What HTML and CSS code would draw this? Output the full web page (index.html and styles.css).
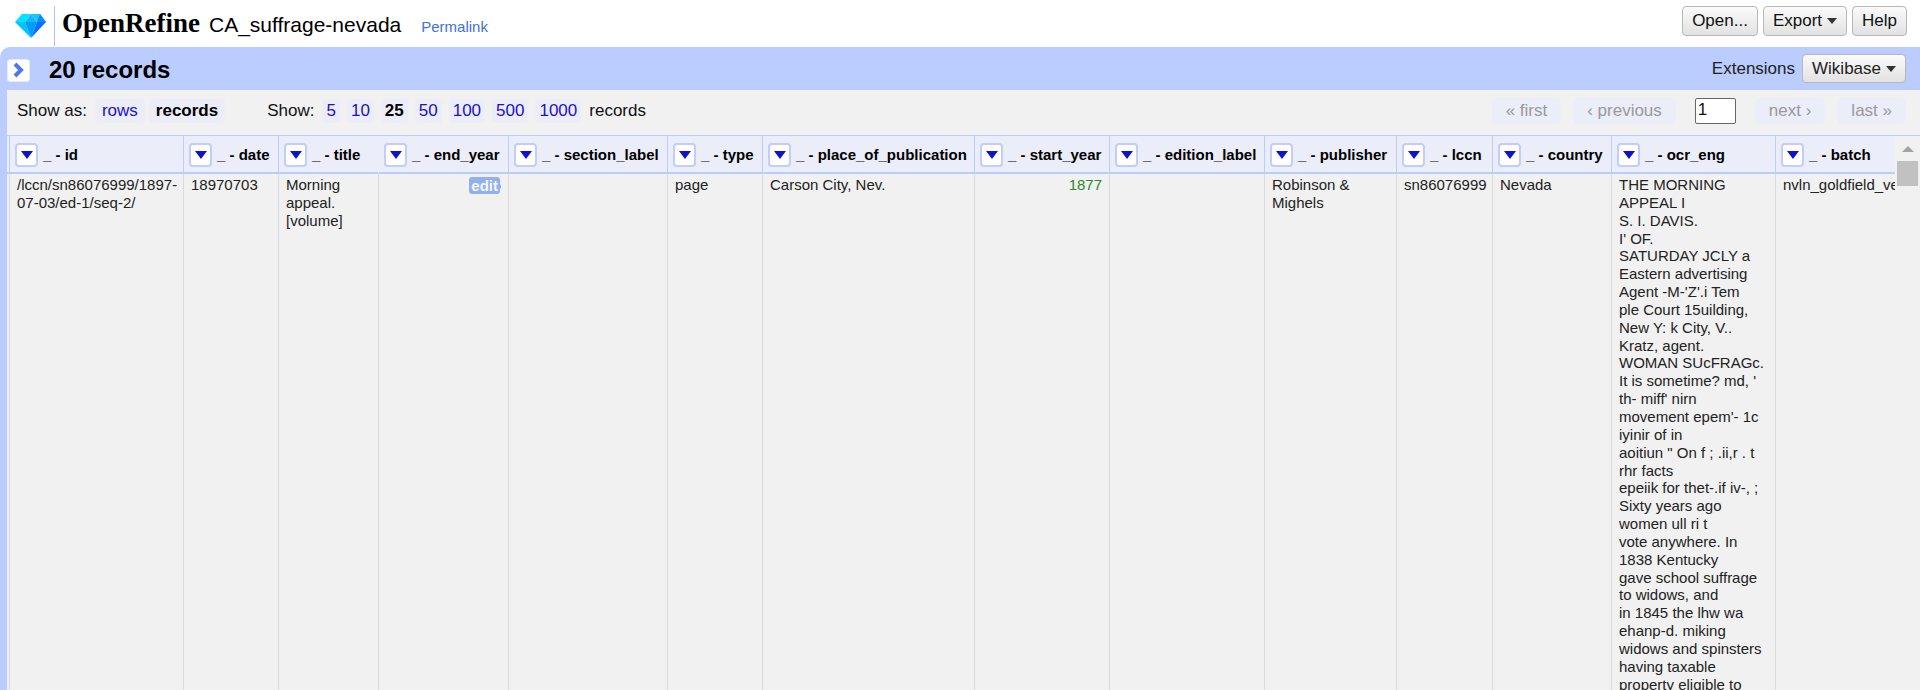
FILE: index.html
```html
<!DOCTYPE html>
<html lang="en">
<head>
<meta charset="utf-8">
<title>CA_suffrage-nevada - OpenRefine</title>
<link rel="stylesheet" href="styles.css">
</head>
<body>
<header class="header">
  <a class="gem" href="#" aria-label="Home">
    <svg width="32" height="26" viewBox="0 0 32 26">
      <path fill="#00e5ff" d="M7 1h9L10 9H0z"/>
      <path fill="#14c8ff" d="M16 1h9l6 8H22z"/>
      <path fill="#18b4ff" d="M16 1l6 8H10z"/>
      <path fill="#00c3ff" d="M0 9h10l6 16z"/>
      <path fill="#009dff" d="M10 9h12l-6 16z"/>
      <path fill="#0072ff" d="M22 9h9L16 25z"/>
      <path fill="#0a8cff" d="M25 1l6 8h-9z"/>
    </svg>
  </a>
  <span class="brand">OpenRefine</span>
  <h1 class="project">CA_suffrage-nevada</h1>
  <a class="permalink" href="#">Permalink</a>
  <div class="header-buttons">
    <button class="button" type="button">Open...</button>
    <button class="button" type="button">Export<span class="caret"></span></button>
    <button class="button" type="button">Help</button>
  </div>
</header>
<main class="panel">
  <div class="summary">
    <button class="expand" type="button" aria-label="Show side panel">
      <svg width="12" height="16" viewBox="0 0 12 16"><path d="M2 2l6 6-6 6" fill="none" stroke="#4c78e8" stroke-width="4"/></svg>
    </button>
    <h2 class="count">20 records</h2>
    <span class="extensions">Extensions</span>
    <button class="button" type="button">Wikibase<span class="caret"></span></button>
  </div>
  <div class="view">
    <div class="controls">
      <span>Show as:</span>
      <div class="modes"><a class="chip" href="#">rows</a><span class="chip current">records</span></div>
      <span>Show:</span>
      <div class="sizes">
        <a href="#">5</a><a href="#">10</a><span class="current">25</span><a href="#">50</a><a href="#">100</a><a href="#">500</a><a href="#">1000</a>
      </div>
      <span>records</span>
      <nav class="pager">
        <span class="page-link">« first</span>
        <span class="page-link">‹ previous</span>
        <input class="page-input" type="text" value="1" aria-label="Page">
        <span class="page-link">next ›</span>
        <span class="page-link">last »</span>
      </nav>
    </div>
    <div class="grid">
      <div class="grid-scroll">
        <table class="data">
          <colgroup>
            <col class="c-gutter"><col class="c-id"><col class="c-date"><col class="c-title"><col class="c-end"><col class="c-section"><col class="c-type"><col class="c-place"><col class="c-start"><col class="c-edition"><col class="c-publisher"><col class="c-lccn"><col class="c-country"><col class="c-ocr"><col class="c-batch">
          </colgroup>
          <thead>
            <tr>
              <th></th>
              <th><div class="head"><button class="menu" type="button" aria-label="id menu"></button>_ - id</div></th>
              <th><div class="head"><button class="menu" type="button" aria-label="date menu"></button>_ - date</div></th>
              <th class="open"><div class="head"><button class="menu" type="button" aria-label="title menu"></button>_ - title</div></th>
              <th><div class="head"><button class="menu" type="button" aria-label="end year menu"></button>_ - end_year</div></th>
              <th><div class="head"><button class="menu" type="button" aria-label="section label menu"></button>_ - section_label</div></th>
              <th><div class="head"><button class="menu" type="button" aria-label="type menu"></button>_ - type</div></th>
              <th><div class="head"><button class="menu" type="button" aria-label="place of publication menu"></button>_ - place_of_publication</div></th>
              <th><div class="head"><button class="menu" type="button" aria-label="start year menu"></button>_ - start_year</div></th>
              <th><div class="head"><button class="menu" type="button" aria-label="edition label menu"></button>_ - edition_label</div></th>
              <th><div class="head"><button class="menu" type="button" aria-label="publisher menu"></button>_ - publisher</div></th>
              <th><div class="head"><button class="menu" type="button" aria-label="lccn menu"></button>_ - lccn</div></th>
              <th><div class="head"><button class="menu" type="button" aria-label="country menu"></button>_ - country</div></th>
              <th><div class="head"><button class="menu" type="button" aria-label="ocr menu"></button>_ - ocr_eng</div></th>
              <th><div class="head"><button class="menu" type="button" aria-label="batch menu"></button>_ - batch</div></th>
            </tr>
          </thead>
          <tbody>
            <tr>
              <td></td>
              <td>/lccn/sn86076999/1897-<br>07-03/ed-1/seq-2/</td>
              <td>18970703</td>
              <td>Morning appeal. [volume]</td>
              <td class="number"><div class="cell">6<button class="edit" type="button">edit</button></div></td>
              <td></td>
              <td>page</td>
              <td>Carson City, Nev.</td>
              <td class="number">1877</td>
              <td></td>
              <td>Robinson &amp; Mighels</td>
              <td>sn86076999</td>
              <td>Nevada</td>
              <td class="ocr">THE MORNING
APPEAL I
S. I. DAVIS.
I' OF.
SATURDAY JCLY a
Eastern advertising
Agent -M-'Z'.i Tem
ple Court 15uilding,
New Y: k City, V..
Kratz, agent.
WOMAN SUcFRAGc.
It is sometime? md, '
th- miff' nirn
movement epem'- 1c
iyinir of in
aoitiun " On f ; .ii,r . t
rhr facts
epeiik for thet-.if iv-, ;
Sixty years ago
women ull ri t
vote anywhere. In
1838 Kentucky
gave school suffrage
to widows, and
in 1845 the lhw wa
ehanp-d. miking
widows and spinsters
having taxable
property eligible to</td>
              <td class="batch">nvln_goldfield_ver01</td>
            </tr>
          </tbody>
        </table>
      </div>
      <div class="scrollbar"><span class="scroll-up"></span><span class="scroll-thumb"></span></div>
    </div>
  </div>
</main>
</body>
</html>
```
FILE: styles.css
```css
* { box-sizing: border-box; }

body {
  margin: 0;
  height: 100vh;
  overflow: hidden;
  display: flex;
  flex-direction: column;
  background: #fff;
  color: #000;
  font: 17px/20px "Liberation Sans", Arial, sans-serif;
}

a { color: #1c10cc; text-decoration: none; }
button, input { font: inherit; color: inherit; }

.header {
  display: flex;
  align-items: baseline;
  padding: 6px 13px 0 15px;
  height: 47px;
}
.gem {
  align-self: flex-start;
  width: 40px;
  height: 40px;
  padding-top: 7px;
  border-right: 1px solid #a8c4fa;
}
.gem svg { display: block; }
.brand {
  margin-left: 7px;
  font: bold 27px/34px "Liberation Serif", serif;
}
.project { margin: 0 0 0 9px; font-size: 21px; font-weight: normal; }
.permalink { margin-left: 20px; font-size: 15px; color: #4272db; }
.header-buttons { display: flex; gap: 5px; margin-left: auto; align-self: flex-start; }

.button {
  display: flex;
  align-items: center;
  gap: 5px;
  height: 30px;
  padding: 0 9px;
  border: 1px solid #b8b8b8;
  border-radius: 4px;
  background: linear-gradient(#fafafa, #e2e2e2);
  color: #111;
}
.caret {
  border: 5px solid transparent;
  border-top: 6px solid #333;
  border-bottom: 0;
}

.panel {
  flex: 1;
  min-height: 0;
  display: flex;
  flex-direction: column;
  padding-left: 7px;
  border-top-left-radius: 10px;
  background: #bbccff;
}
.summary {
  display: flex;
  align-items: center;
  height: 43px;
  padding-right: 14px;
}
.summary .button { height: 29px; color: #222; }
.expand {
  display: flex;
  align-items: center;
  justify-content: center;
  width: 23px;
  height: 23px;
  margin-top: 3px;
  padding: 0;
  border: 1px solid #e4ebff;
  border-radius: 3px;
  background: #fff;
}
.count { margin: 3px 0 0 19px; font-size: 24px; line-height: 28px; }
.extensions { margin: 0 7px 0 auto; color: #222; }

.view {
  flex: 1;
  min-height: 0;
  display: flex;
  flex-direction: column;
  background: #f1f1f1;
}
.controls {
  display: flex;
  align-items: center;
  height: 45px;
  padding: 0 14px 4px 10px;
  color: #111;
}
.modes { display: flex; gap: 4px; margin: 0 42px 0 8px; }
.sizes { display: flex; gap: 7px; margin: 0 8px; }
.chip, .sizes > * {
  padding: 2px 4px;
  border-radius: 4px;
  background: #ebedf9;
}
.chip { padding: 2px 7px; }
.current { font-weight: bold; color: #000; }
.pager { display: flex; align-items: center; gap: 12px; margin-left: auto; }
.page-link {
  padding: 3px 14px;
  border-radius: 6px;
  background: #ebedf9;
  color: #999;
}
.page-input {
  width: 41px;
  height: 26px;
  margin: 0 7px;
  padding: 0 2px 2px;
  border: 1px solid #666;
  border-radius: 2px;
  background: #fff;
}

.grid {
  flex: 1;
  min-height: 0;
  display: flex;
  border-top: 1px solid #bbccff;
}
.grid-scroll { flex: 1; min-width: 0; overflow: hidden; }
.data {
  width: 2000px;
  table-layout: fixed;
  border-collapse: separate;
  border-spacing: 0;
  font-size: 15px;
  line-height: 1.19;
}
.c-gutter { width: 3px; }
.c-id { width: 174px; }
.c-date, .c-type { width: 95px; }
.c-title { width: 100px; }
.c-end { width: 130px; }
.c-section { width: 159px; }
.c-place { width: 212px; }
.c-start { width: 135px; }
.c-edition { width: 155px; }
.c-publisher { width: 132px; }
.c-lccn { width: 96px; }
.c-country { width: 119px; }
.c-ocr { width: 164px; }

th {
  height: 38px;
  padding: 1px 0 0;
  border-right: 1px solid #bbccff;
  border-bottom: 2px solid #bbccff;
  background: #ebedf9;
  text-align: left;
  white-space: nowrap;
}
th.open { border-right-color: #ebedf9; }
.head { display: flex; align-items: center; gap: 5px; padding-left: 5px; }
.menu {
  display: flex;
  align-items: center;
  justify-content: center;
  width: 23px;
  height: 24px;
  padding: 0;
  border: 2px solid #c2cdfb;
  border-radius: 4px;
  background: #fff;
}
.menu::before {
  content: "";
  border: 6px solid transparent;
  border-top: 8px solid #1010d0;
  border-bottom: 0;
}
td {
  padding: 2px 7px;
  border-right: 1px solid #dadada;
  vertical-align: top;
  color: #222;
}
th:first-child, td:first-child { padding: 0; }
td.number { text-align: right; color: #2a8a2a; }
.cell { position: relative; }
.edit {
  position: absolute;
  top: 1px;
  right: 1px;
  padding: 0 2px;
  border: 0;
  border-radius: 3px;
  background: #94b0ec;
  color: #f4f7ff;
  font-weight: bold;
  line-height: 17px;
}
.ocr { white-space: pre; }
.batch { white-space: nowrap; }

.scrollbar {
  display: flex;
  flex-direction: column;
  align-items: center;
  gap: 9px;
  width: 25px;
  padding-top: 10px;
  background: #f1f1f1;
}
.scroll-up {
  border: 6px solid transparent;
  border-bottom: 6px solid #a3a3a3;
  border-top: 0;
}
.scroll-thumb { width: 21px; height: 25px; background: #c1c1c1; }
```
